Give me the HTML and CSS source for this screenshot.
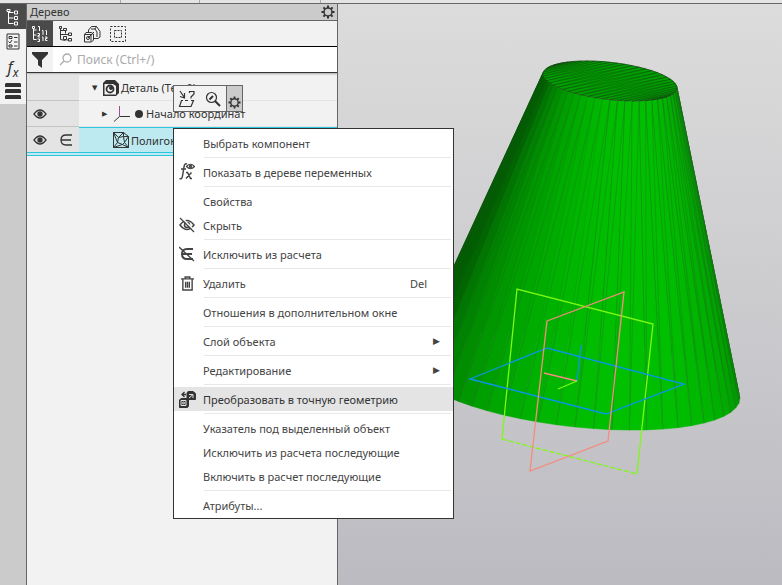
FILE: index.html
```html
<!DOCTYPE html>
<html lang="ru">
<head>
    <meta charset="UTF-8">
    <meta name="viewport" content="width=device-width, initial-scale=1.0">
    <title>Дерево</title>
    <link rel="stylesheet" href="styles.css">
</head>
<body>
    <div class="top-strip">
        <span class="strip-cell wide"></span>
        <span class="strip-cell"></span>
        <span class="strip-cell wide"></span>
    </div>

    <div class="workspace">
        <!-- Left icon rail -->
        <nav class="rail">
            <button class="rail-btn active" type="button" aria-label="Дерево">
                <svg width="16" height="18" viewBox="0 0 16 18" fill="none" stroke="currentColor">
                    <path d="M3.500 3v12.500h5M3.500 4.500h5M3.500 10h5"/>
                    <path d="M2 1.500h3v2H2zM9.500 3h3v3h-3zM9.500 8.500h3v3h-3zM9.500 14h3v3h-3z"/>
                </svg>
            </button>
            <button class="rail-btn" type="button" aria-label="Параметры">
                <svg width="14" height="17" viewBox="0 0 14 17" fill="none" stroke="currentColor">
                    <path d="M1 1h12v15H1zM3 3.500h3v2H3zM3 12h3v2H3zM8 4.500h3.500M8 13h3.500M8 9h3.500M2.500 8.500l1.500 1.500 2-3"/>
                </svg>
            </button>
            <button class="rail-btn" type="button" aria-label="Переменные">
                <span class="fx">f<sub>x</sub></span>
            </button>
            <button class="rail-btn" type="button" aria-label="Меню">
                <svg width="16" height="17" viewBox="0 0 16 17" fill="currentColor">
                    <path d="M1 0h14l1 1v3H0V1zM1 6h14l1 1v3H0V7zM1 12h14l1 1v3H0v-3z"/>
                </svg>
            </button>
        </nav>

        <!-- Tree panel -->
        <section class="panel">
            <header class="panel-header">
                <h1>Дерево</h1>
                <button class="icon-btn" type="button" aria-label="Настройка">
                    <svg width="14" height="14" viewBox="0 0 14 14" fill="none" stroke="currentColor">
                        <circle cx="7" cy="7" r="4" stroke-width="1.500"/>
                        <path stroke-width="2" d="M7 .5v2.500M7 11v2.500M.5 7H3M11 7h2.500M2.400 2.400l1.600 1.600M10 10l1.600 1.600M2.400 11.600L4 10M10 4l1.600-1.600"/>
                    </svg>
                </button>
            </header>

            <div class="toolbar">
                <button class="tool-btn active" type="button" aria-label="Нумерация">
                    <svg width="18" height="18" viewBox="0 0 18 18" fill="none" stroke="currentColor">
                        <path d="M2.500 4v10.500h3M2.500 5h3M2.500 10h3"/>
                        <path d="M1.500 1.500h2v2h-2zM7 1.500h1.500V6M6.500 8.500h2v2h-1.500v1.500h2M6.500 14h2v2.500h-2M11 5.500h1V10M14.500 5.500h1V10M11 12h1v4M14 12h2v1.500h-1.500v2h2"/>
                    </svg>
                </button>
                <button class="tool-btn" type="button" aria-label="Структура">
                    <svg width="16" height="18" viewBox="0 0 16 18" fill="none" stroke="currentColor">
                        <path d="M2.500 4v10.500l5 1M2.500 5.500h3M2.500 9.500h8M7.500 5.500v3M8.500 15h2"/>
                        <path d="M1.500 1.500h2v2h-2zM5.500 3.500h3v2h-3zM10.500 8h3v2.500h-3zM10.500 13.500h3V16h-3zM5.500 11.500h3v3h-3z"/>
                    </svg>
                </button>
                <button class="tool-btn" type="button" aria-label="Детали">
                    <svg width="18" height="18" viewBox="0 0 18 18" fill="none" stroke="currentColor">
                        <path d="M5.500 8V5l3-3.500h5l3.500 5v5.500l-2 1.500h-4M8 4h4l2 3v5M12 4l1.500-2.500M1.500 9.500l1.500-2h5.500l2 1.500v6l-2 2h-7zM1.500 9.500h6.500v7M8 9.500l2-1"/>
                        <circle cx="5" cy="13" r="1.500"/>
                        <path d="M5 13l6-6"/>
                    </svg>
                </button>
                <button class="tool-btn" type="button" aria-label="Область">
                    <svg width="18" height="18" viewBox="0 0 18 18" fill="none" stroke="currentColor">
                        <path stroke-dasharray="2 1.500" d="M1.500 1.500h15v15h-15z"/>
                        <path stroke-dasharray="2 1" d="M5.500 5.500h7v7h-7z"/>
                    </svg>
                </button>
            </div>

            <div class="search">
                <button class="filter-btn" type="button" aria-label="Фильтр">
                    <svg width="16" height="16" viewBox="0 0 16 16" fill="currentColor">
                        <path d="M0 0h16v2l-6 6v8l-4-3V8L0 2z"/>
                    </svg>
                </button>
                <label class="search-label" for="treeSearch" aria-label="Поиск">
                    <svg width="13" height="13" viewBox="0 0 13 13" fill="none" stroke="currentColor" stroke-width="1.300">
                        <circle cx="8" cy="5" r="4"/>
                        <path d="M5 8l-4 4"/>
                    </svg>
                </label>
                <input type="text" id="treeSearch" placeholder="Поиск (Ctrl+/)">
            </div>

            <ul class="tree">
                <li class="tree-row">
                    <div class="gutter"></div>
                    <div class="node level-1">
                        <span class="arrow">▼</span>
                        <svg width="16" height="16" viewBox="0 0 16 16" fill="none" stroke="currentColor">
                            <path fill="currentColor" stroke="none" d="M0 3l3-3h9l4 4v9l-3 3H0z"/>
                            <path fill="#f2f2f2" stroke="none" d="M1.500 4h8.500l3 2v8.500H1.500z"/>
                            <circle cx="7" cy="9" r="3.500" stroke-width="1.800"/>
                            <circle cx="8" cy="8" r="1.500" fill="currentColor"/>
                        </svg>
                        <span>Деталь (Тел-0)</span>
                    </div>
                </li>
                <li class="tree-row">
                    <div class="gutter">
                        <svg width="14" height="10" viewBox="0 0 14 10" fill="none" stroke="currentColor" stroke-width="1.300">
                            <path d="M1 5q6-8 12 0q-6 8-12 0z"/>
                            <circle cx="7" cy="5" r="2" fill="currentColor"/>
                        </svg>
                    </div>
                    <div class="node level-2">
                        <span class="arrow">▶</span>
                        <svg width="16" height="16" viewBox="0 0 16 16" fill="none">
                            <path stroke="#a24a9c" d="M5.500 0v10"/>
                            <path stroke="#333" d="M5.500 10.500H16M5.500 10.500L0 15.500"/>
                        </svg>
                        <span class="dot"></span>
                        <span>Начало координат</span>
                    </div>
                </li>
                <li class="tree-row selected">
                    <div class="gutter">
                        <svg width="14" height="10" viewBox="0 0 14 10" fill="none" stroke="currentColor" stroke-width="1.300">
                            <path d="M1 5q6-8 12 0q-6 8-12 0z"/>
                            <circle cx="7" cy="5" r="2" fill="currentColor"/>
                        </svg>
                        <svg width="12" height="12" viewBox="0 0 12 12" fill="none" stroke="currentColor" stroke-width="1.300">
                            <path d="M12 1H6Q1 1 1 6t5 5h6M1 6h10"/>
                        </svg>
                    </div>
                    <div class="node level-3">
                        <svg width="16" height="16" viewBox="0 0 16 16" fill="none" stroke="currentColor">
                            <path d="M.5 .5h10l5 4v11H.5zM.5 .5l5 5 5-5v4h5l-4 6 4 5-6-3-9 3 4-5-4-10M5.500 5.500l5-1 1 6-2 2-5-2z"/>
                        </svg>
                        <span>Полигон</span>
                    </div>
                </li>
            </ul>
        </section>

        <!-- 3D view -->
        <main class="viewport">
            <svg class="scene" viewBox="338 4 444 581" preserveAspectRatio="xMinYMin slice">
                <g id="cone"></g>
                <g class="planes">
                    <path class="plane-green" d="M502 439L517 289 653 324 637 474"/>
                    <path class="plane-green dashed" d="M502 439L637 474"/>
                    <path class="plane-blue" d="M470 379L547 348 684 384 606 414z"/>
                    <path class="plane-pink" d="M547 321L624 292 608 441 530 471z"/>
                    <path class="plane-blue" d="M581 345L577 381"/>
                    <path class="plane-pink" d="M544 373L577 381"/>
                    <path class="plane-green" d="M558 389L577 381"/>
                </g>
            </svg>
        </main>
    </div>

    <!-- Quick actions above the context menu -->
    <div class="mini-bar">
        <button type="button" aria-label="Эскиз">
            <svg width="18" height="18" viewBox="0 0 18 18" fill="none" stroke="currentColor" stroke-width="1.200">
                <path d="M2 1l4 6M6.500 3v5L2 6.500M5 10.500H3.500l-2 6H13l2.500-6H13M7 10.500h3"/>
                <path d="M11.500 3V1.500h4.500V4l-3 3v1.500"/>
            </svg>
        </button>
        <button type="button" aria-label="Показать">
            <svg width="16" height="16" viewBox="0 0 16 16" fill="none" stroke="currentColor">
                <circle cx="6.500" cy="6.500" r="5" stroke-width="1.200"/>
                <path stroke-width="2" d="M10 10l5 5M4.500 8.500l3.500-3.500"/>
            </svg>
        </button>
        <button class="mini-settings" type="button" aria-label="Настройка">
            <svg width="13" height="13" viewBox="0 0 14 14" fill="none" stroke="currentColor">
                <circle cx="7" cy="7" r="4" stroke-width="1.500"/>
                <path stroke-width="2" d="M7 .5v2.500M7 11v2.500M.5 7H3M11 7h2.500M2.400 2.400l1.600 1.600M10 10l1.600 1.600M2.400 11.600L4 10M10 4l1.600-1.600"/>
            </svg>
        </button>
    </div>

    <!-- Context menu -->
    <div class="context-menu" role="menu">
        <button class="menu-item" type="button" role="menuitem"><span class="menu-icon"></span>Выбрать компонент</button>
        <hr>
        <button class="menu-item" type="button" role="menuitem">
            <span class="menu-icon">
                <svg width="16" height="18" viewBox="0 0 16 18" fill="none" stroke="currentColor" stroke-width="1.500">
                    <path d="M8 1Q5.500 0 5 4L3.500 13Q3 16.500 .5 15.500M2 6h5M7 9.500h1.500l3 6H13M12.500 9.500L7 15.500"/>
                    <path stroke-width="1.200" d="M7.500 3.500q4-4.500 8 0q-4 4.500-8 0z"/>
                    <circle cx="11.500" cy="3.500" r="1"/>
                </svg>
            </span>Показать в дереве переменных
        </button>
        <hr>
        <button class="menu-item" type="button" role="menuitem"><span class="menu-icon"></span>Свойства</button>
        <button class="menu-item" type="button" role="menuitem">
            <span class="menu-icon">
                <svg width="16" height="16" viewBox="0 0 16 16" fill="none" stroke="currentColor" stroke-width="1.500">
                    <path d="M1 8q7-9 14 0q-7 9-14 0z"/>
                    <circle cx="8" cy="8" r="2.500"/>
                    <path stroke="#fff" d="M2 0l13 13"/>
                    <path stroke-width="1.200" d="M1 1l14 14"/>
                </svg>
            </span>Скрыть
        </button>
        <hr>
        <button class="menu-item" type="button" role="menuitem">
            <span class="menu-icon">
                <svg width="16" height="16" viewBox="0 0 16 16" fill="none" stroke="currentColor" stroke-width="2">
                    <path d="M14 3H8Q3 3 3 8t5 5h6M3 8h10"/>
                    <path stroke-width="1.300" d="M0 1l15 14"/>
                </svg>
            </span>Исключить из расчета
        </button>
        <hr>
        <button class="menu-item" type="button" role="menuitem">
            <span class="menu-icon">
                <svg width="13" height="15" viewBox="0 0 14 16" fill="none" stroke="currentColor" stroke-width="1.500">
                    <path d="M0 3h14M4.500 3V1h5v2M2 3v12h10V3"/>
                    <path d="M5 6v6.500M7 6v6.500M9 6v6.500"/>
                </svg>
            </span>Удалить<kbd>Del</kbd>
        </button>
        <hr>
        <button class="menu-item" type="button" role="menuitem"><span class="menu-icon"></span>Отношения в дополнительном окне</button>
        <hr>
        <button class="menu-item" type="button" role="menuitem"><span class="menu-icon"></span>Слой объекта<span class="submenu">▶</span></button>
        <hr>
        <button class="menu-item" type="button" role="menuitem"><span class="menu-icon"></span>Редактирование<span class="submenu">▶</span></button>
        <hr>
        <button class="menu-item hovered" type="button" role="menuitem">
            <span class="menu-icon">
                <svg width="17" height="17" viewBox="0 0 17 17" fill="none" stroke="currentColor">
                    <path fill="currentColor" d="M8 2l1-1.500h5l2.500 2v6H8zM.5 9L2 7.500h6l1.500 1.500v6l-1 1.500h-8z"/>
                    <path stroke="#e4e4e4" d="M10 3.500h4v3.500M10 7l3.500-3M2 9.500h5v5H2z"/>
                    <circle cx="4.500" cy="12" r="1" stroke="#e4e4e4"/>
                    <path stroke-width="1.300" d="M7 3.500H3.500M5.500 1l-2.500 2.500L5.500 6"/>
                </svg>
            </span>Преобразовать в точную геометрию
        </button>
        <hr>
        <button class="menu-item" type="button" role="menuitem"><span class="menu-icon"></span>Указатель под выделенный объект</button>
        <button class="menu-item" type="button" role="menuitem"><span class="menu-icon"></span>Исключить из расчета последующие</button>
        <button class="menu-item" type="button" role="menuitem"><span class="menu-icon"></span>Включить в расчет последующие</button>
        <hr>
        <button class="menu-item" type="button" role="menuitem"><span class="menu-icon"></span>Атрибуты...</button>
    </div>

    <script src="cone.js"></script>
</body>
</html>
```
FILE: styles.css
```css
/* General Styles */
* {
    box-sizing: border-box;
}

body {
    margin: 0;
    height: 100vh;
    display: flex;
    flex-direction: column;
    overflow: hidden;
    font-family: "Noto Sans", "Open Sans", sans-serif;
    font-size: 11px;
    color: #333;
    background-color: #f2f2f2;
}

button {
    display: flex;
    align-items: center;
    justify-content: center;
    padding: 0;
    border: none;
    background: none;
    font: inherit;
    color: inherit;
}

svg {
    flex-shrink: 0;
}

.top-strip {
    display: flex;
    flex-shrink: 0;
    height: 4px;
    background-color: #e4e4e4;
    border-bottom: 1px solid #666;
}

.strip-cell {
    width: 79px;
    border-right: 1px solid #aaa;
}

.strip-cell.wide {
    width: 121px;
}

.workspace {
    flex: 1;
    display: flex;
    min-height: 0;
}

/* Rail */
.rail {
    width: 27px;
    flex-shrink: 0;
    background-color: #cbcbcb;
    border-right: 1px solid #666;
}

.rail-btn {
    width: 100%;
    height: 25px;
    background-color: #f2f2f2;
}

.rail-btn.active,
.tool-btn.active {
    background-color: #4a4a4a;
    color: #fff;
}

.fx {
    font-size: 16px;
    font-style: italic;
    line-height: 18px;
}

.fx sub {
    font-size: 12px;
    line-height: 0;
}

/* Tree panel */
.panel {
    width: 311px;
    flex-shrink: 0;
    background-color: #f2f2f2;
    border-right: 1px solid #666;
}

.panel-header {
    display: flex;
    align-items: center;
    justify-content: space-between;
    height: 17px;
    padding: 0 2px 0 3px;
    background-color: #cbcbcb;
    border-bottom: 1px solid #666;
}

.panel-header h1 {
    margin: 0;
    font-size: 11px;
    font-weight: normal;
    line-height: 16px;
}

.toolbar {
    display: flex;
    height: 26px;
    border-bottom: 1px solid #000;
}

.tool-btn {
    width: 26px;
}

.search {
    display: flex;
    align-items: center;
    height: 26px;
    background-color: #fff;
    border-bottom: 1px solid #333;
    box-shadow: 0 1px 2px rgba(0, 0, 0, 0.3);
}

.filter-btn {
    width: 26px;
    height: 100%;
    background-color: #f2f2f2;
}

.search-label {
    display: flex;
    padding: 0 5px 0 6px;
    color: #aaa;
}

.search input {
    flex: 1;
    min-width: 0;
    padding: 0;
    border: none;
    outline: none;
    background: none;
    font: inherit;
    font-size: 12px;
}

.search input::placeholder {
    color: #aaa;
}

.tree {
    margin: 0;
    padding: 2px 0 0;
    list-style: none;
}

.tree-row {
    display: flex;
    height: 26px;
    white-space: nowrap;
}

.gutter {
    display: flex;
    align-items: center;
    gap: 13px;
    width: 52px;
    flex-shrink: 0;
    padding-left: 6px;
    background-color: #e4e4e4;
    border-bottom: 1px solid #c4c4c4;
}

.node {
    flex: 1;
    display: flex;
    align-items: center;
    min-width: 0;
    overflow: hidden;
    border-bottom: 1px solid #e4e4e4;
}

.level-1 {
    gap: 2px;
    padding-left: 13px;
}

.level-2 {
    gap: 3px;
    padding-left: 23px;
}

.level-3 {
    gap: 2px;
    padding-left: 34px;
}

.arrow {
    width: 9px;
    font-family: "DejaVu Sans", sans-serif;
    font-size: 7px;
}

.dot {
    width: 8px;
    height: 8px;
    margin-left: 2px;
    border-radius: 50%;
    background-color: #333;
}

.tree-row.selected {
    height: 29px;
    border-bottom: 1px solid #2cc6de;
}

.selected .gutter,
.selected .node {
    border-bottom: 1px solid #2cc6de;
    box-shadow: 0 2px 0 #bde9f0;
    height: 26px;
}

.selected .node {
    background-color: #bde9f0;
    border-top: 1px solid #2cc6de;
}

/* 3D view */
.viewport {
    flex: 1;
    min-width: 0;
    background: linear-gradient(to bottom, #dcdcdc, #bcbbc1);
}

.scene {
    display: block;
    width: 100%;
    height: 100%;
}

.planes path {
    fill: none;
    stroke-width: 1.3;
}

.plane-green {
    stroke: #7dfa14;
}

.plane-green.dashed {
    stroke-dasharray: 5 2;
}

.plane-blue {
    stroke: #0a96e6;
}

.plane-pink {
    stroke: #f58c7d;
}

/* Mini toolbar */
.mini-bar {
    position: absolute;
    left: 173px;
    top: 85px;
    display: flex;
    height: 27px;
    background-color: #f2f2f2;
    border: 1px solid #666;
}

.mini-bar button {
    width: 26px;
}

.mini-bar .mini-settings {
    width: 16px;
    align-items: flex-end;
    padding-bottom: 2px;
    background-color: #cbcbcb;
    border-left: 1px solid #666;
}

/* Context menu */
.context-menu {
    position: absolute;
    left: 173px;
    top: 128px;
    width: 281px;
    padding: 2px 0 1px;
    background-color: #fff;
    border: 1px solid #333;
    color: #444;
}

.menu-item {
    justify-content: flex-start;
    width: 100%;
    height: 24px;
    padding-right: 13px;
    text-align: left;
    white-space: nowrap;
}

.menu-item:hover,
.menu-item.hovered {
    background-color: #e4e4e4;
    color: #333;
}

.menu-icon {
    display: flex;
    align-items: center;
    justify-content: center;
    width: 26px;
    margin-right: 3px;
}

.menu-item kbd {
    margin-left: auto;
    margin-right: 13px;
    font: inherit;
}

.submenu {
    margin-left: auto;
    font-family: "DejaVu Sans", sans-serif;
    font-size: 9px;
}

.context-menu hr {
    height: 1px;
    margin: 2px 2px 2px 30px;
    border: none;
    background-color: #e8e8e8;
}
```
FILE: cone.js
```js
// Draws the faceted truncated cone
const cone = document.getElementById('cone');
const COUNT = 56;
const STEP = Math.PI * 2 / COUNT;

const topRim = { x: 610, y: 81, scale: 1 };
const baseRim = { x: 575, y: 381, scale: 2.46 };

function rimPoint(rim, i) {
    const t = i * STEP;
    const x = rim.x + rim.scale * 67 * Math.cos(t);
    const y = rim.y + rim.scale * (7 * Math.cos(t) + 18.7 * Math.sin(t));
    return x.toFixed(1) + ' ' + y.toFixed(1);
}

function addPath(d, fill, stroke, width) {
    const path = document.createElementNS('http://www.w3.org/2000/svg', 'path');
    path.setAttribute('d', d);
    path.setAttribute('fill', fill);
    path.setAttribute('stroke', stroke);
    path.setAttribute('stroke-width', width);
    cone.appendChild(path);
}

// Side facets, the far ones first
const order = [];
for (let i = 0; i < COUNT; i++) {
    order.push(i);
}
order.sort((a, b) => Math.sin((a + 0.5) * STEP) - Math.sin((b + 0.5) * STEP));

order.forEach(i => {
    const light = Math.max(0, Math.cos((i + 0.5) * STEP - 1.2));
    const green = Math.round(95 + 97 * Math.pow(light, 0.7));
    const fill = `rgb(0, ${green}, 0)`;
    const a = rimPoint(topRim, i);
    const b = rimPoint(topRim, i + 1);
    const c = rimPoint(baseRim, i + 1);
    const d = rimPoint(baseRim, i);
    addPath(`M${a}L${b}L${c}L${d}z`, fill, fill, 0.5);
    addPath(`M${d}L${a}L${c}`, 'none', 'rgba(50, 70, 50, 0.5)', 0.5);
});

// Top cap with its triangle strip
let outline = '';
for (let i = 0; i < COUNT; i++) {
    outline += (i ? 'L' : 'M') + rimPoint(topRim, i);
}
addPath(outline + 'z', '#00a000', '#2a5a2a', 0.7);

let strip = '';
for (let i = 1; i < COUNT / 2; i++) {
    strip += (i > 1 ? 'L' : 'M') + rimPoint(topRim, 6 + i) + 'L' + rimPoint(topRim, 6 - i);
}
addPath(strip, 'none', 'rgba(20, 50, 20, 0.55)', 0.6);
```
